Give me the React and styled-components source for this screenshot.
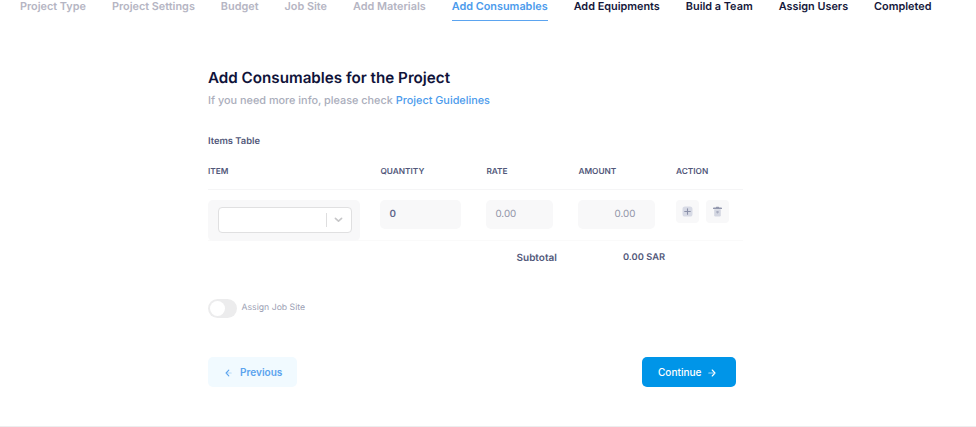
import React from "react";
import styled, { createGlobalStyle } from "styled-components";

const GlobalStyle = createGlobalStyle`
  *, *::before, *::after { box-sizing: border-box; }
  body {
    margin: 0;
    background: #fff;
    font-family: Inter, "Liberation Sans", sans-serif;
    text-rendering: geometricPrecision;
    overflow: hidden;
  }
`;

const Page = styled.div`
  height: 427px;
  display: flex;
  flex-direction: column;
  background: #fff;
  border-bottom: 1px solid #ededee;
`;

const Stepper = styled.nav`
  display: flex;
  gap: 26px;
  height: 21px;
  padding-left: 20px;
  flex: none;
`;

const stepColors = { done: "#b5b5c3", current: "#4c9bec", upcoming: "#14173a" };

const Step = styled.a`
  height: 21px;
  line-height: 13px;
  font-size: 10.87px;
  font-weight: 600;
  white-space: nowrap;
  color: ${(p) => stepColors[p.$state]};
  border-bottom: 1px solid ${(p) => (p.$state === "current" ? "#5ba4f0" : "transparent")};
`;

const Form = styled.main`
  width: 535px;
  margin-left: 208px;
  padding-top: 47px;
`;

const Title = styled.h1`
  margin: 0;
  font-size: 15.2px;
  line-height: 20px;
  font-weight: 600;
  color: #10133a;
`;

const Hint = styled.p`
  margin: 3px 0 0;
  font-size: 10.87px;
  line-height: 18px;
  font-weight: 500;
  color: #aaadbb;
`;

const HintLink = styled.a`
  color: #4c9bec;
`;

const TableLabel = styled.h2`
  margin: 25px 0 0;
  font-size: 9.35px;
  line-height: 16px;
  font-weight: 600;
  color: #52587a;
`;

const GridRow = styled.div`
  display: grid;
  grid-template-columns: 172.4px 106px 92px 97.6px 1fr;
`;

const HeadRow = styled(GridRow)`
  height: 40px;
  padding-top: 14px;
  border-bottom: 1px solid #f5f5f6;
`;

const HeadCell = styled.span`
  font-size: 8.3px;
  line-height: 16px;
  font-weight: 600;
  color: #52587a;
`;

const ItemRow = styled(GridRow)`
  height: 51px;
  padding-top: 9.5px;
  border-bottom: 1px solid #fafafa;
  align-items: start;
`;

const SelectShell = styled.div`
  width: 152px;
  height: 41px;
  padding: 7px 8.5px 7px 9.5px;
  border-radius: 5px;
  background: #f8f8f9;
`;

const Select = styled.div`
  display: flex;
  align-items: center;
  justify-content: flex-end;
  height: 26.5px;
  border: 1px solid #e0e0e1;
  border-radius: 4px;
  background: #fff;
`;

const SelectArrow = styled.div`
  display: flex;
  align-items: center;
  justify-content: center;
  width: 25px;
  height: 14px;
  border-left: 1px solid #dededf;
  color: #c6c6c8;
`;

const Field = styled.div`
  width: ${(p) => p.$width}px;
  height: 29px;
  padding: ${(p) => (p.$right ? "0 19.5px 0 0" : "0 0 0 9px")};
  border-radius: 5px;
  background: #f8f8f9;
  text-align: ${(p) => (p.$right ? "right" : "left")};
  font-size: 9.8px;
  line-height: 29px;
  font-weight: ${(p) => (p.$filled ? 600 : 400)};
  color: ${(p) => (p.$filled ? "#62678c" : "#9295a8")};
`;

const Actions = styled.div`
  display: flex;
  gap: 7px;
`;

const IconButton = styled.button`
  display: flex;
  align-items: center;
  justify-content: center;
  width: 23px;
  height: 23px;
  padding: 0;
  border: 0;
  border-radius: 4px;
  background: #f8f8f9;
`;

const TotalRow = styled.div`
  display: grid;
  grid-template-columns: 106.5px 1fr;
  padding: 9px 0 0 308.5px;
  line-height: 16px;
  font-weight: 600;
  color: #52587a;
`;

const TotalLabel = styled.span`
  font-size: 10px;
`;

const TotalValue = styled.span`
  font-size: 9.3px;
`;

const SwitchRow = styled.label`
  display: flex;
  align-items: center;
  gap: 5px;
  height: 20px;
  margin-top: 32px;
  font-size: 8.7px;
  color: #9c9fb4;
`;

const Switch = styled.span`
  width: 28.5px;
  height: 19px;
  padding: 2px;
  border-radius: 10px;
  background: #ececed;
`;

const Knob = styled.span`
  display: block;
  width: 15px;
  height: 15px;
  border-radius: 50%;
  background: #fff;
`;

const Footer = styled.div`
  display: flex;
  justify-content: space-between;
  width: 528px;
  margin-top: 39px;
`;

const NavButton = styled.button`
  display: flex;
  align-items: center;
  justify-content: flex-start;
  gap: ${(p) => (p.$primary ? 7 : 8)}px;
  width: ${(p) => (p.$primary ? 94 : 89)}px;
  height: 30px;
  padding: 0 0 0 ${(p) => (p.$primary ? 16 : 17)}px;
  border: 0;
  border-radius: 5px;
  font-family: inherit;
  font-size: 10.05px;
  line-height: 14px;
  font-weight: ${(p) => (p.$primary ? 500 : 600)};
  color: ${(p) => (p.$primary ? "#fff" : "#5ba3ee")};
  background: ${(p) => (p.$primary ? "#0095e8" : "#f1faff")};

  svg {
    margin-top: 2px;
  }
`;

const steps = [
  ["Project Type", "done"],
  ["Project Settings", "done"],
  ["Budget", "done"],
  ["Job Site", "done"],
  ["Add Materials", "done"],
  ["Add Consumables", "current"],
  ["Add Equipments", "upcoming"],
  ["Build a Team", "upcoming"],
  ["Assign Users", "upcoming"],
  ["Completed", "upcoming"],
];

const columns = ["ITEM", "QUANTITY", "RATE", "AMOUNT", "ACTION"];

const ChevronIcon = () => (
  <svg width="9" height="6" viewBox="0 0 9 6" fill="none" stroke="currentColor" strokeWidth="1.6" strokeLinecap="round" strokeLinejoin="round">
    <path d="M1.4 1.4l3.1 2.8L7.6 1.4" />
  </svg>
);

const PlusIcon = () => (
  <svg width="11" height="11" viewBox="0 0 11 11">
    <rect x="0.5" y="0.5" width="10" height="10" rx="2.6" fill="#d7dae5" />
    <path d="M5.5 2.7v5.6M2.7 5.5h5.6" stroke="#8c92aa" strokeWidth="1.1" strokeLinecap="round" />
  </svg>
);

const TrashIcon = () => (
  <svg width="11" height="11" viewBox="0 0 11 11">
    <path d="M2.2 3.3h6.6v6q0 1.3-1.3 1.3h-4q-1.3 0-1.3-1.3z" fill="#d3d6e1" />
    <path d="M4.4 5h2.2v1.4L5.5 7.8 4.4 6.4z" fill="#a9adc0" />
    <path d="M1 2.4q0-.8.8-.8h2L4.3.7h2.4l.5.9h2q.8 0 .8.8v.5H1z" fill="#9297ad" />
  </svg>
);

const BackIcon = () => (
  <svg width="7" height="8" viewBox="0 0 7 8" fill="none" strokeLinecap="round" strokeLinejoin="round">
    <path d="M2 4h4.2" stroke="#b5daf8" strokeWidth="1.1" />
    <path d="M3.8 1.2L1.1 4l2.7 2.8" stroke="#5ba3ee" strokeWidth="1.1" />
  </svg>
);

const ForwardIcon = () => (
  <svg width="8" height="8" viewBox="0 0 8 8" fill="none" strokeLinecap="round" strokeLinejoin="round">
    <path d="M.8 4H6" stroke="#a5d9f8" strokeWidth="1.1" />
    <path d="M4.2 1L7 4 4.2 7" stroke="#fff" strokeWidth="1.1" />
  </svg>
);

export default function App() {
  return (
    <Page>
      <GlobalStyle />
      <Stepper>
        {steps.map(([label, state]) => (
          <Step key={label} $state={state}>{label}</Step>
        ))}
      </Stepper>
      <Form>
        <Title>Add Consumables for the Project</Title>
        <Hint>
          If you need more info, please check <HintLink>Project Guidelines</HintLink>
        </Hint>
        <TableLabel>Items Table</TableLabel>
        <HeadRow>
          {columns.map((c) => (
            <HeadCell key={c}>{c}</HeadCell>
          ))}
        </HeadRow>
        <ItemRow>
          <SelectShell>
            <Select>
              <SelectArrow><ChevronIcon /></SelectArrow>
            </Select>
          </SelectShell>
          <Field $width={80.5} $filled>0</Field>
          <Field $width={66.5}>0.00</Field>
          <Field $width={76.5} $right>0.00</Field>
          <Actions>
            <IconButton aria-label="Add row"><PlusIcon /></IconButton>
            <IconButton aria-label="Delete row"><TrashIcon /></IconButton>
          </Actions>
        </ItemRow>
        <TotalRow>
          <TotalLabel>Subtotal</TotalLabel>
          <TotalValue>0.00 SAR</TotalValue>
        </TotalRow>
        <SwitchRow>
          <Switch><Knob /></Switch>
          Assign Job Site
        </SwitchRow>
        <Footer>
          <NavButton><BackIcon />Previous</NavButton>
          <NavButton $primary>Continue<ForwardIcon /></NavButton>
        </Footer>
      </Form>
    </Page>
  );
}
